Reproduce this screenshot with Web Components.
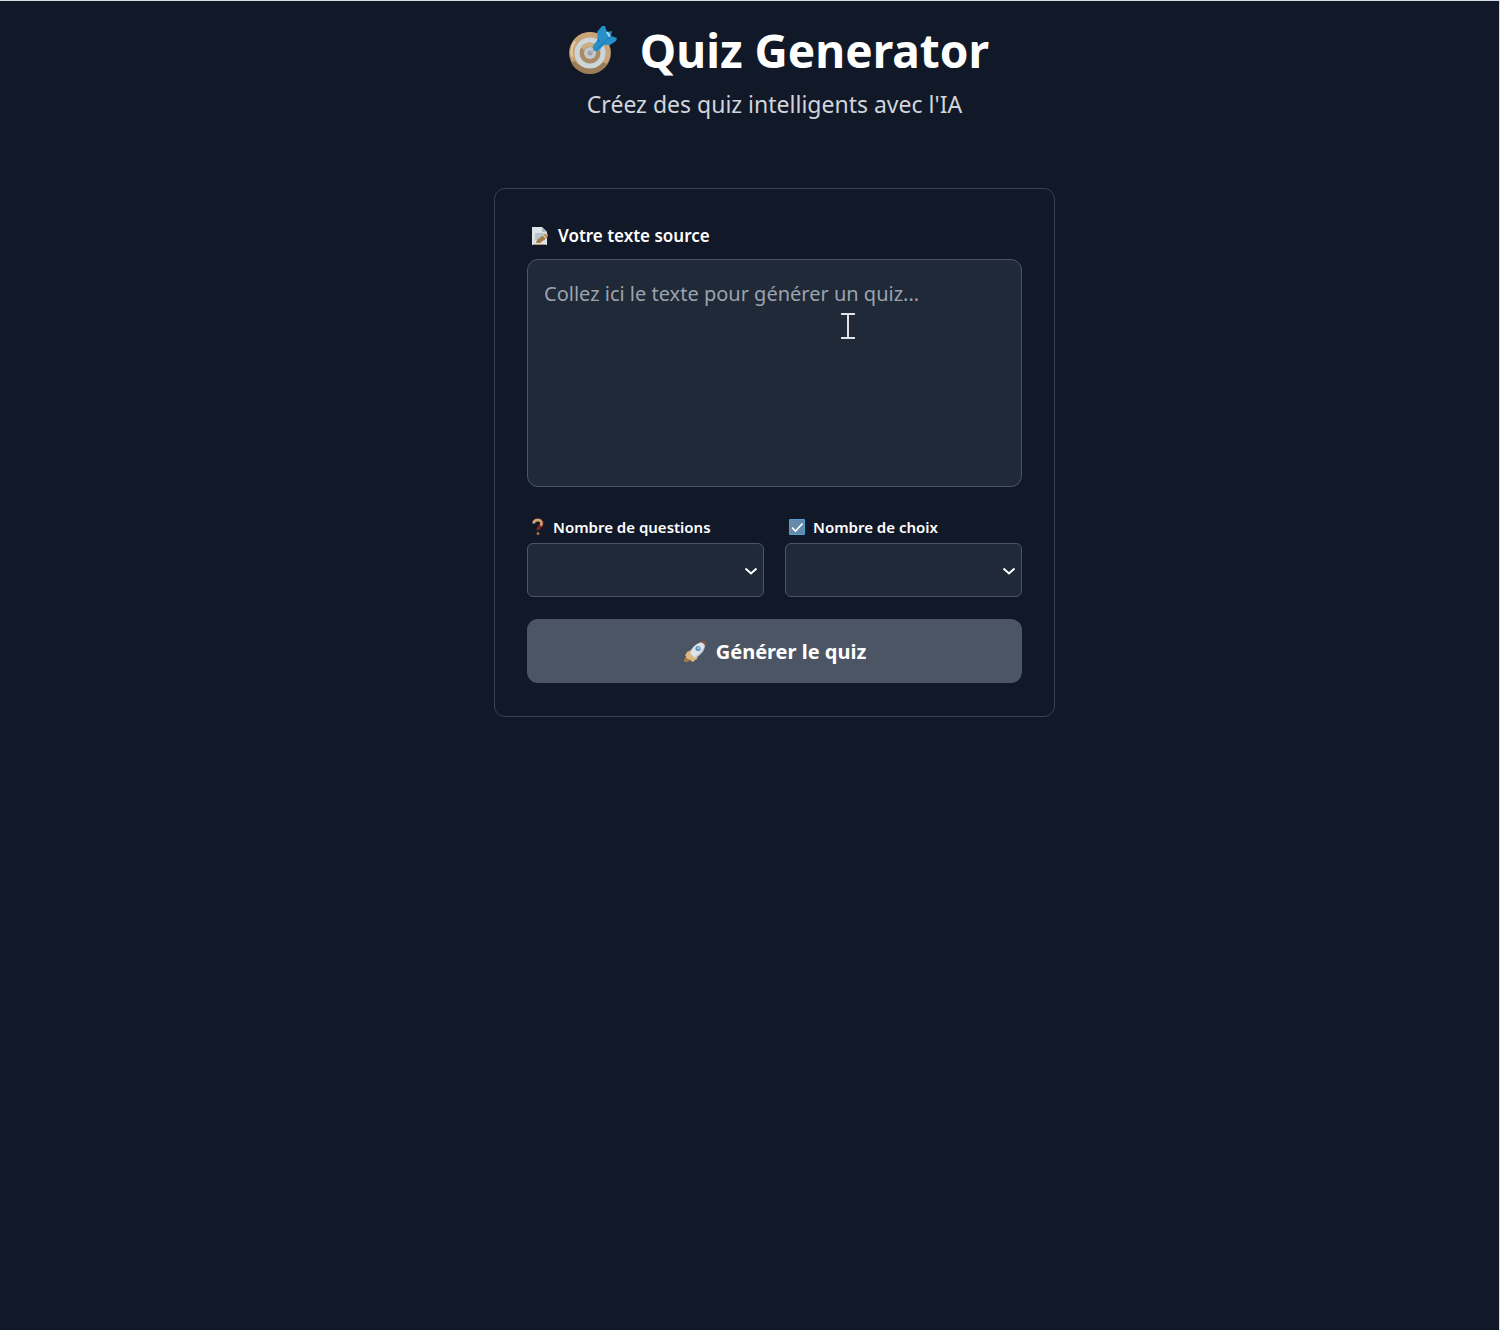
<!DOCTYPE html>
<html lang="fr">
<head>
<meta charset="utf-8">
<meta name="viewport" content="width=device-width, initial-scale=1">
<title>Quiz Generator</title>
<style>
  html { background: #111827; }
  body { margin: 0; font-family: "Noto Sans", "Open Sans", sans-serif; color: #fff; }
</style>
</head>
<body>
<quiz-app>
  <quiz-header slot="header" subtitle="Créez des quiz intelligents avec l'IA">Quiz Generator</quiz-header>
  <quiz-card>
    <text-field icon="memo" placeholder="Collez ici le texte pour générer un quiz...">Votre texte source</text-field>
    <field-row>
      <select-field icon="question">Nombre de questions</select-field>
      <select-field icon="check">Nombre de choix</select-field>
    </field-row>
    <action-button icon="rocket">Générer le quiz</action-button>
  </quiz-card>
</quiz-app>

<script>
const ICONS = {
  target: `<svg viewBox="0 0 50 50" width="50" height="50">
    <circle cx="22" cy="28" r="21" fill="#8f7350"/><circle cx="22" cy="27.500" r="20.5" fill="#c8a679"/>
    <path d="M6 16a20 20 0 0 0-3 16l2-1a18 18 0 0 1 3-14z" fill="#e2c9a2"/>
    <path d="M3 37a20.500 20.500 0 0 0 36 2l-4-2A18 18 0 0 1 7 36z" fill="#9a7c56"/>
    <circle cx="22" cy="28" r="15.500" fill="#ccd6da"/><circle cx="22" cy="28" r="10.5" fill="#aa8c64"/>
    <path d="M13 22a10.500 10.500 0 0 1 14-3l-3 3a7 7 0 0 0-8 3z" fill="#cfae80"/>
    <circle cx="22" cy="28" r="6" fill="#c3cace"/><circle cx="22" cy="28" r="2.500" fill="#9ba1a8"/>
    <path d="M21 28 32 18l1 7-9 2z" fill="#aeb9c4"/>
    <path d="M25 21 30 14 29 7 34 1 37 1 39 7 44 6 43 11 49 13 48 16 42 20 36 20 30 26Q24 27 25 21Z" fill="#278fc9"/>
    <path d="M39 7l3 5" stroke="#a5dcf2" stroke-width="2" fill="none"/>
    <path d="M29 24 43 11M30 13l1 4" stroke="#1975a9" stroke-width="1" fill="none"/></svg>`,
  memo: `<svg viewBox="0 0 18 20" width="18" height="20">
    <path d="M0 1h10l5 5v13H0z" fill="#dce4e8"/><path d="M10 1v5h5z" fill="#aab8bf"/>
    <path d="M3 7h10v7H3z" fill="#b9c5c9"/><path d="M1 18.500H14" stroke="#b39063" stroke-width="1"/>
    <path d="M4 17 5 14 13 8 16 11 8 17z" fill="#a47b48"/><path d="M11 9l3 3" stroke="#dfc49a" stroke-width="1.500"/>
    <path d="M13 8l2-1 1 2-1 2z" fill="#d0a676"/></svg>`,
  question: `<svg viewBox="0 0 14 18" width="14" height="18">
    <path d="M3 5C3 1 11 1 11 5.500 11 9 7 8 7 12" fill="none" stroke="#7b2420" stroke-width="3.500"/>
    <path d="M2.500 5.500C3 1 10.500 1 10.500 5c0 1-.5 2-1 2.500" fill="none" stroke="#cda878" stroke-width="2.500"/>
    <circle cx="7" cy="15.500" r="1.500" fill="#b06a4c"/></svg>`,
  check: `<svg viewBox="0 0 16 16" width="16" height="16">
    <rect width="16" height="16" rx="1" fill="#4fa0cb"/><rect x="1" y="1" width="14" height="14" fill="#6489aa"/>
    <path d="M3 8.500 6.500 12 13.500 4.500" fill="none" stroke="#fff" stroke-width="1.600"/></svg>`,
  rocket: `<svg viewBox="0 0 24 22" width="24" height="22">
    <path d="M8 9 4 11 2 15 7 15zM15 15 14 18 9 21 9 15z" fill="#dcb680"/>
    <path d="M4 16 1 18 1 21 5 21 7 19z" fill="#a07848"/><path d="M3 14l4-3 6 6-3 4-3-2-4-2z" fill="#dcb680"/>
    <path d="M7 12Q9 5 16 2 20 0 22 1 23 4 21 8 18 14 12 17z" fill="#dce4ea"/>
    <path d="M12 16Q18 12 22 5q-1 8-10 12z" fill="#b3c2ce"/>
    <path d="M17 1q3-2 6-1 0 3-1 5-1-3-5-4z" fill="#8c5440"/>
    <circle cx="15" cy="7.500" r="2.600" fill="#5a93ba"/><circle cx="15.500" cy="7" r="1.200" fill="#a7c6d8"/></svg>`,
  chevron: `<svg viewBox="0 0 14 8" width="14" height="8">
    <path d="M1.500 1.500 7 6.500 12.500 1.500" fill="none" stroke="#fff" stroke-width="2"/></svg>`,
  ibeam: `<svg viewBox="0 0 14 26" width="14" height="26">
    <path d="M0 1h14M0 25h14M7 1v24" fill="none" stroke="#dfe1e6" stroke-width="2"/></svg>`
};

const BASE = `
  :host { display: block; }
  *, *::before, *::after { box-sizing: border-box; }
  svg { display: block; flex: none; }
  label { display: flex; align-items: center; width: fit-content; font-weight: 600; color: #fff; white-space: nowrap; }
  .field { border: 1px solid #4b5563; background: #1f2937; color: #fff; font-family: inherit; }
`;

class BaseElement extends HTMLElement {
  connectedCallback() {
    if (this.shadowRoot) return;
    this.attachShadow({ mode: "open" }).innerHTML = `<style>${BASE}${this.styles()}</style>${this.markup()}`;
  }
  get icon() { return ICONS[this.getAttribute("icon")] || ""; }
}

customElements.define("quiz-app", class extends BaseElement {
  styles() { return `
    :host { box-sizing: border-box; min-height: 100vh; background: #111827;
      border-top: 1px solid #d3e0e2; border-right: 1px solid #d3e0e2; padding: 15px 0 32px 50px; }
    main { display: flex; flex-direction: column; align-items: center; gap: 66px; }`; }
  markup() { return `<main><slot name="header"></slot><slot></slot></main>`; }
});

customElements.define("quiz-header", class extends BaseElement {
  styles() { return `
    header { display: flex; flex-direction: column; align-items: center; gap: 2px; }
    h1 { display: flex; align-items: center; gap: 14px; margin: 0; font-size: 46px; line-height: 68px; font-weight: 700; }
    .icon { display: flex; justify-content: center; width: 66px; }
    p { margin: 0; color: #d1d5db; font-size: 23px; line-height: 36px; }`; }
  markup() { return `<header><h1><span class="icon" aria-hidden="true">${ICONS.target}</span><slot></slot></h1>
    <p>${this.getAttribute("subtitle")}</p></header>`; }
});

customElements.define("quiz-card", class extends BaseElement {
  styles() { return `
    :host { box-sizing: border-box; width: 100%; max-width: 561px; border: 1px solid #374151; border-radius: 11px; padding: 32px 32px 33px; }
    section { display: flex; flex-direction: column; gap: 22px; }`; }
  markup() { return `<section><slot></slot></section>`; }
});

customElements.define("text-field", class extends BaseElement {
  styles() { return `
    :host { margin-bottom: 6px; }
    label { font-size: 17px; line-height: 30px; gap: 8px; padding-left: 5px; margin-bottom: 8px; }
    .wrap { position: relative; }
    textarea { display: block; width: 100%; height: 228px; margin: 0; padding: 16px; border-radius: 11px;
      resize: none; outline: none; font-size: 20px; line-height: 36px; }
    textarea::placeholder { color: #9ca3af; opacity: 1; }
    .cursor { position: absolute; left: 314px; top: 54px; pointer-events: none; }`; }
  markup() { return `<label for="source">${this.icon}<slot></slot></label>
    <div class="wrap"><textarea id="source" class="field" placeholder="${this.getAttribute("placeholder")}"></textarea>
    <span class="cursor" aria-hidden="true">${ICONS.ibeam}</span></div>`; }
});

customElements.define("field-row", class extends BaseElement {
  styles() { return `
    div { display: grid; grid-template-columns: 1fr 1fr; gap: 21px; }`; }
  markup() { return `<div><slot></slot></div>`; }
});

customElements.define("select-field", class extends BaseElement {
  styles() { return `
    label { font-size: 15px; line-height: 24px; gap: 8px; padding-left: 4px; margin-bottom: 4px; }
    .wrap { position: relative; }
    select { appearance: none; display: block; width: 100%; height: 54px; padding: 0 32px 0 16px; border-radius: 6px; outline: none; font-size: 20px; }
    .chevron { position: absolute; right: 6px; top: 24px; pointer-events: none; }`; }
  markup() { return `<label for="count">${this.icon}<slot></slot></label>
    <div class="wrap"><select id="count" class="field"><option value=""></option></select>
    <span class="chevron" aria-hidden="true">${ICONS.chevron}</span></div>`; }
});

customElements.define("action-button", class extends BaseElement {
  styles() { return `
    button { display: flex; align-items: center; justify-content: center; gap: 9px; width: 100%; height: 64px; margin: 0; padding: 2px 0 0;
      border: 0; border-radius: 11px; background: #4b5563; color: #fff; font-family: inherit; font-size: 20px; line-height: 32px; font-weight: 700; }`; }
  markup() { return `<button type="button">${this.icon}<span><slot></slot></span></button>`; }
});
</script>
</body>
</html>
